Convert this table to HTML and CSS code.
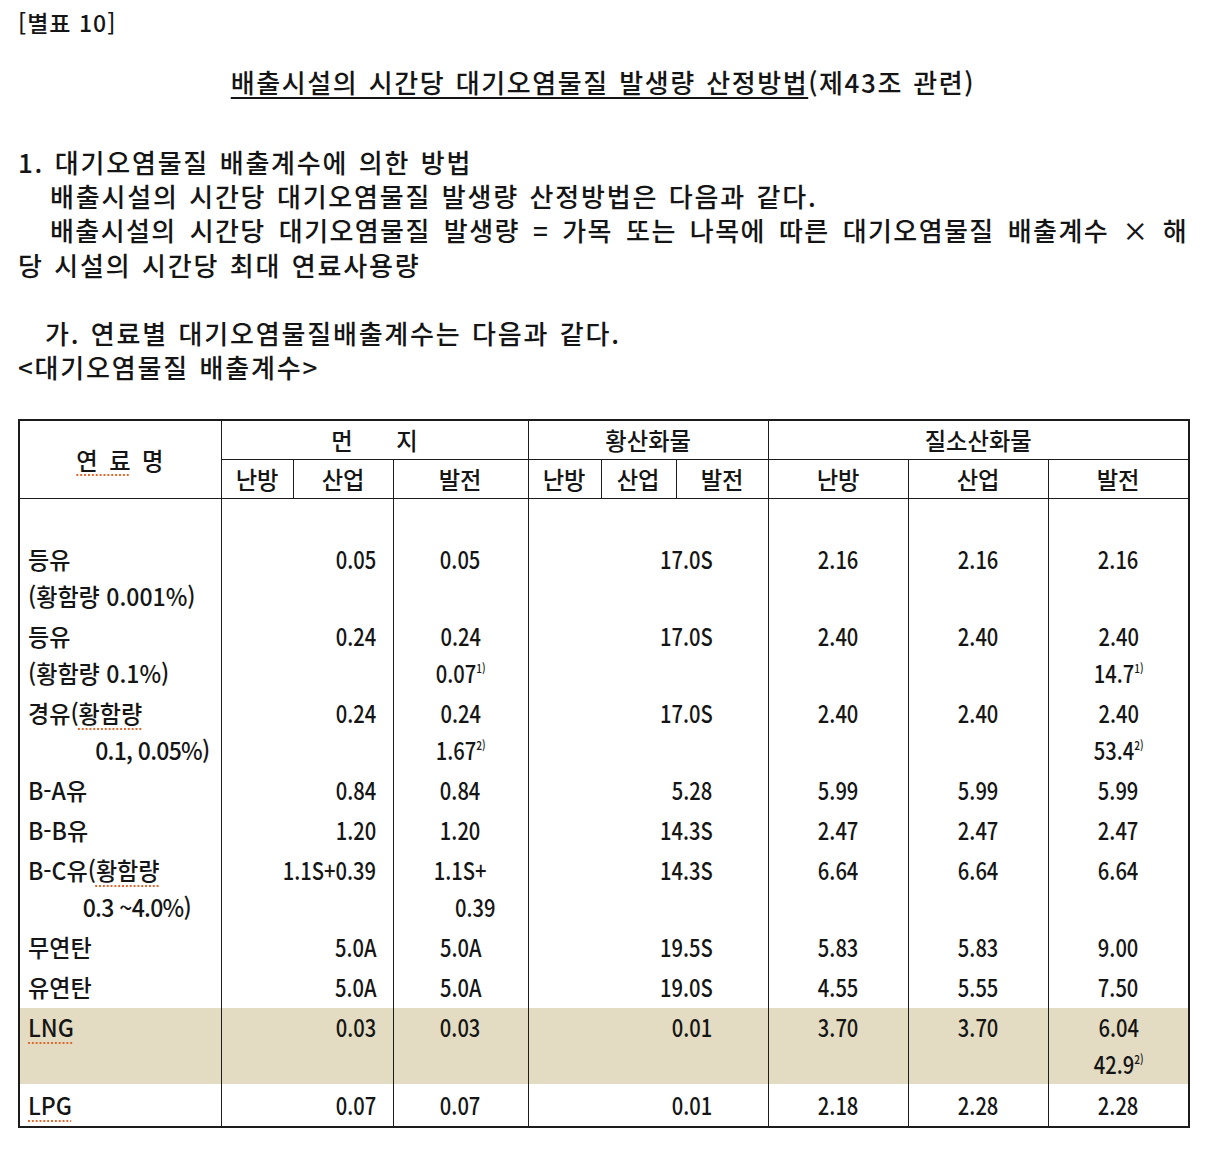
FILE: index.html
```html
<!DOCTYPE html>
<html lang="ko">
<head>
<meta charset="utf-8">
<title>[별표 10] 배출시설의 시간당 대기오염물질 발생량 산정방법</title>
<link rel="stylesheet" href="styles.css">
</head>
<body>
<div class="page">
  <p class="annex">[별표 10]</p>
  <h1 class="title"><span class="ul">배출시설의 시간당 대기오염물질 발생량 산정방법</span>(제43조 관련)</h1>

  <div class="sec">
    <p>1. 대기오염물질 배출계수에 의한 방법</p>
    <p class="ind">배출시설의 시간당 대기오염물질 발생량 산정방법은 다음과 같다.</p>
    <p class="ind just">배출시설의 시간당 대기오염물질 발생량 = 가목 또는 나목에 따른 대기오염물질 배출계수 × 해</p>
    <p>당 시설의 시간당 최대 연료사용량</p>
    <p class="blank">&nbsp;</p>
    <p class="sub">가. 연료별 대기오염물질배출계수는 다음과 같다.</p>
    <p>&lt;대기오염물질 배출계수&gt;</p>
  </div>

  <table class="ef">
    <colgroup>
      <col class="w-name">
      <col class="w-d1"><col class="w-d2"><col class="w-d3">
      <col class="w-s1"><col class="w-s2"><col class="w-s3">
      <col class="w-n"><col class="w-n"><col class="w-n3">
    </colgroup>
    <thead>
      <tr class="h1">
        <th rowspan="2"><span class="s name-h"><span class="sp">연 료</span> 명</span></th>
        <th colspan="3"><span class="s dust">먼 지</span></th>
        <th colspan="3"><span class="s">황산화물</span></th>
        <th colspan="3"><span class="s">질소산화물</span></th>
      </tr>
      <tr class="h2">
        <th><span class="s">난방</span></th>
        <th><span class="s">산업</span></th>
        <th><span class="s">발전</span></th>
        <th><span class="s">난방</span></th>
        <th><span class="s">산업</span></th>
        <th><span class="s">발전</span></th>
        <th><span class="s">난방</span></th>
        <th><span class="s">산업</span></th>
        <th><span class="s">발전</span></th>
      </tr>
    </thead>
    <tbody>
      <tr class="first">
        <td class="l"><span class="s">등유<br>(황함량 0.001%)</span></td>
        <td class="r" colspan="2"><span class="s">0.05</span></td>
        <td class="c"><span class="s">0.05</span></td>
        <td class="r" colspan="3"><span class="s">17.0S</span></td>
        <td class="c"><span class="s">2.16</span></td>
        <td class="c"><span class="s">2.16</span></td>
        <td class="c"><span class="s">2.16</span></td>
      </tr>
      <tr>
        <td class="l"><span class="s">등유<br>(황함량 0.1%)</span></td>
        <td class="r" colspan="2"><span class="s">0.24</span></td>
        <td class="c"><span class="s">0.24<br>0.07<sup>1)</sup></span></td>
        <td class="r" colspan="3"><span class="s">17.0S</span></td>
        <td class="c"><span class="s">2.40</span></td>
        <td class="c"><span class="s">2.40</span></td>
        <td class="c"><span class="s">2.40<br>14.7<sup>1)</sup></span></td>
      </tr>
      <tr>
        <td class="l"><span class="s">경유(<span class="sp">황함량</span><br><span class="in1">0.1, 0.05%)</span></span></td>
        <td class="r" colspan="2"><span class="s">0.24</span></td>
        <td class="c"><span class="s">0.24<br>1.67<sup>2)</sup></span></td>
        <td class="r" colspan="3"><span class="s">17.0S</span></td>
        <td class="c"><span class="s">2.40</span></td>
        <td class="c"><span class="s">2.40</span></td>
        <td class="c"><span class="s">2.40<br>53.4<sup>2)</sup></span></td>
      </tr>
      <tr>
        <td class="l"><span class="s">B-A유</span></td>
        <td class="r" colspan="2"><span class="s">0.84</span></td>
        <td class="c"><span class="s">0.84</span></td>
        <td class="r" colspan="3"><span class="s">5.28</span></td>
        <td class="c"><span class="s">5.99</span></td>
        <td class="c"><span class="s">5.99</span></td>
        <td class="c"><span class="s">5.99</span></td>
      </tr>
      <tr>
        <td class="l"><span class="s">B-B유</span></td>
        <td class="r" colspan="2"><span class="s">1.20</span></td>
        <td class="c"><span class="s">1.20</span></td>
        <td class="r" colspan="3"><span class="s">14.3S</span></td>
        <td class="c"><span class="s">2.47</span></td>
        <td class="c"><span class="s">2.47</span></td>
        <td class="c"><span class="s">2.47</span></td>
      </tr>
      <tr>
        <td class="l"><span class="s">B-C유(<span class="sp">황함량</span><br><span class="in2">0.3 ~4.0%)</span></span></td>
        <td class="r" colspan="2"><span class="s">1.1S+0.39</span></td>
        <td class="c"><span class="s">1.1S+<br><span class="in3">0.39</span></span></td>
        <td class="r" colspan="3"><span class="s">14.3S</span></td>
        <td class="c"><span class="s">6.64</span></td>
        <td class="c"><span class="s">6.64</span></td>
        <td class="c"><span class="s">6.64</span></td>
      </tr>
      <tr>
        <td class="l"><span class="s">무연탄</span></td>
        <td class="r" colspan="2"><span class="s">5.0A</span></td>
        <td class="c"><span class="s">5.0A</span></td>
        <td class="r" colspan="3"><span class="s">19.5S</span></td>
        <td class="c"><span class="s">5.83</span></td>
        <td class="c"><span class="s">5.83</span></td>
        <td class="c"><span class="s">9.00</span></td>
      </tr>
      <tr class="pre">
        <td class="l"><span class="s">유연탄</span></td>
        <td class="r" colspan="2"><span class="s">5.0A</span></td>
        <td class="c"><span class="s">5.0A</span></td>
        <td class="r" colspan="3"><span class="s">19.0S</span></td>
        <td class="c"><span class="s">4.55</span></td>
        <td class="c"><span class="s">5.55</span></td>
        <td class="c"><span class="s">7.50</span></td>
      </tr>
      <tr class="hl">
        <td class="l"><span class="s"><span class="sp">LNG</span></span></td>
        <td class="r" colspan="2"><span class="s">0.03</span></td>
        <td class="c"><span class="s">0.03</span></td>
        <td class="r" colspan="3"><span class="s">0.01</span></td>
        <td class="c"><span class="s">3.70</span></td>
        <td class="c"><span class="s">3.70</span></td>
        <td class="c"><span class="s">6.04<br>42.9<sup>2)</sup></span></td>
      </tr>
      <tr class="last">
        <td class="l"><span class="s"><span class="sp">LPG</span></span></td>
        <td class="r" colspan="2"><span class="s">0.07</span></td>
        <td class="c"><span class="s">0.07</span></td>
        <td class="r" colspan="3"><span class="s">0.01</span></td>
        <td class="c"><span class="s">2.18</span></td>
        <td class="c"><span class="s">2.28</span></td>
        <td class="c"><span class="s">2.28</span></td>
      </tr>
    </tbody>
  </table>
</div>
</body>
</html>
```

FILE: styles.css
```css
html, body {
  margin: 0;
  padding: 0;
  background: #ffffff;
}

body {
  font-family: "Noto Sans CJK KR", "Noto Sans", sans-serif;
  font-weight: 500;
  color: #151515;
}

.page {
  width: 1170px;
  margin-left: 18px;
  padding-top: 5px;
}

p {
  margin: 0;
}

.annex {
  font-size: 23px;
  line-height: 34px;
  letter-spacing: 1px;
}

.title {
  margin: 26px 0 0;
  font-size: 26px;
  font-weight: 500;
  line-height: 34px;
  text-align: center;
  letter-spacing: 1.6px;
  word-spacing: 1.5px;
}

.title .ul {
  text-decoration: underline;
  text-decoration-thickness: 1.5px;
  text-underline-offset: 4px;
}

.sec {
  margin-top: 46px;
  font-size: 26px;
  line-height: 34.2px;
  letter-spacing: 1.8px;
  word-spacing: 1.5px;
}

.sec .ind {
  padding-left: 32px;
}

.sec .just {
  text-align: justify;
  text-align-last: justify;
  letter-spacing: 1.4px;
  word-spacing: 0;
}

.sec .sub {
  padding-left: 27px;
}

/* table */
.ef {
  margin-top: 35px;
  width: 1170px;
  table-layout: fixed;
  border-collapse: collapse;
  border: 2px solid #1c1c1c;
  font-size: 24px;
}

.w-name { width: 202px; }
.w-d1 { width: 72px; }
.w-d2 { width: 100px; }
.w-d3 { width: 135px; }
.w-s1 { width: 73px; }
.w-s2 { width: 75px; }
.w-s3 { width: 92px; }
.w-n { width: 140px; }
.w-n3 { width: 141px; }

.ef th {
  font-weight: 500;
  border: 1.5px solid #1c1c1c;
  height: 38px;
  padding: 0;
  line-height: 30px;
  text-align: center;
  vertical-align: middle;
}

.ef th .s {
  transform: scaleX(0.97);
  transform-origin: center;
}

.ef .dust {
  word-spacing: 38px;
}

.ef .name-h {
  word-spacing: 5px;
}

.ef td {
  border-left: 1.5px solid #1c1c1c;
  border-right: 1.5px solid #1c1c1c;
  padding: 3px 0 0;
  line-height: 37px;
  vertical-align: top;
}

.ef tr.first td {
  padding-top: 41px;
}

.ef tr.pre td {
  padding-bottom: 3px;
}

.ef tr.hl td {
  background: #e3dcc2;
  padding-top: 0;
  padding-bottom: 2px;
}

.ef tr.last td {
  padding-top: 2px;
  padding-bottom: 3px;
}

.s {
  display: inline-block;
  white-space: nowrap;
  transform: scaleX(0.84);
}

.ef td.l {
  text-align: left;
  padding-left: 8px;
}

.ef td.l .s {
  transform: scaleX(0.96);
  transform-origin: left center;
}

.ef td.r {
  text-align: right;
}

.ef td.r .s {
  transform-origin: right center;
}

.ef td.r[colspan="2"] {
  padding-right: 16px;
}

.ef td.r[colspan="3"] {
  padding-right: 55px;
}

.ef td.c {
  text-align: center;
}

.ef td.c .s {
  transform-origin: center;
}

.in1 {
  display: inline-block;
  padding-left: 70px;
  letter-spacing: -0.8px;
}

.in2 {
  display: inline-block;
  padding-left: 57px;
  letter-spacing: -0.8px;
}

.in3 {
  display: inline-block;
  padding-left: 36px;
}

sup {
  font-size: 12px;
  line-height: 0;
  vertical-align: 10px;
}

.sp {
  text-decoration: underline dotted #e0682c;
  text-decoration-thickness: 2px;
  text-underline-offset: 5px;
}
```
